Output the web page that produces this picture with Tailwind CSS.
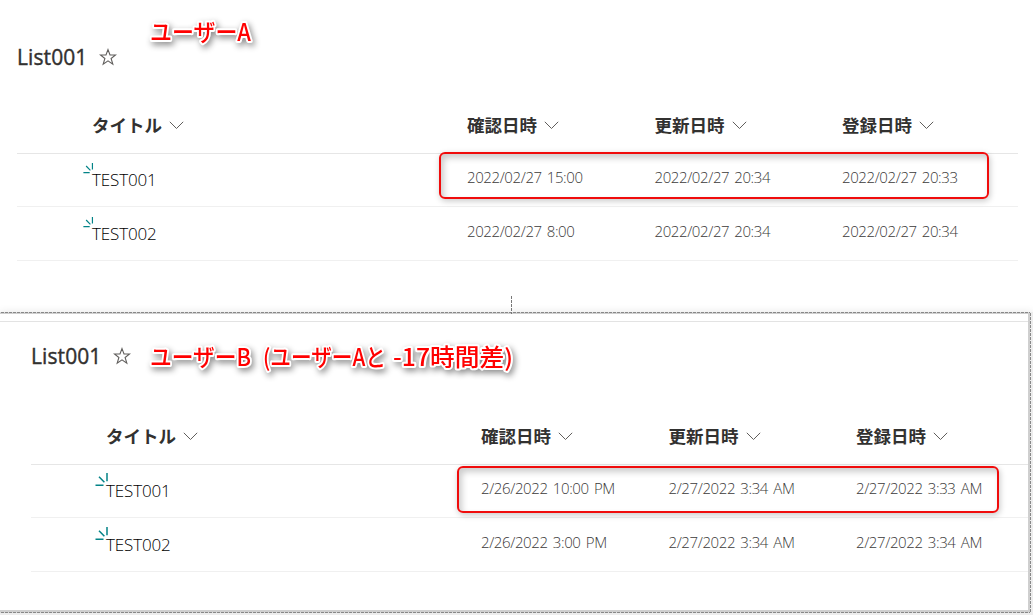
<!DOCTYPE html>
<html lang="ja">
<head>
    <meta charset="UTF-8">
    <meta name="viewport" content="width=device-width, initial-scale=1.0">
    <title>List001</title>
    <script src="https://cdn.jsdelivr.net/npm/@tailwindcss/browser@4"></script>
</head>
<body class="relative w-[1033px] h-[615px] overflow-hidden bg-white font-['Open_Sans','Noto_Sans_CJK_JP',sans-serif] text-[#323130] whitespace-nowrap">

    <!-- Shared icons -->
    <svg class="hidden">
        <symbol id="star" viewBox="0 0 18 18"><path d="M9 1.6 11 7h5.6l-4.5 3.5 1.7 5.6L9 12.8l-4.8 3.3 1.7-5.6L1.400 7H7z" fill="none" stroke="#605e5c" stroke-width="1.1"/></symbol>
        <symbol id="chevron" viewBox="0 0 15 9"><path d="M.8.8 7.500 7.500 14.200.8" fill="none" stroke="#605e5c" stroke-width="1"/></symbol>
        <symbol id="spark" viewBox="0 0 14 14"><path d="M.5 12.300H8.500M4 3.800 9.400 9.300M12 0V8.300" fill="none" stroke="#038387" stroke-width="1.500"/></symbol>
    </svg>

    <!-- User A -->
    <section class="h-[312px] pl-[17px] pr-[15px] pt-10 flex flex-col">
        <div class="h-[34px] flex items-center">
            <h1 class="w-[82px] pt-[2px] text-[21px] font-medium tracking-[0.1px] [-webkit-text-stroke:0.4px_#323130]">List001</h1>
            <svg class="size-[18px]"><use href="#star"/></svg>
        </div>
        <div class="mt-[25px] h-[55px] pb-[1px] pl-[75px] border-b border-[#e6e6e6] grid grid-cols-[375px_187.5px_187.5px_auto] items-center text-[17.5px] font-bold">
            <div class="flex items-center gap-[7px]"><span>タイトル</span><svg class="w-[15px] h-[9px]"><use href="#chevron"/></svg></div>
            <div class="flex items-center gap-[7px]"><span>確認日時</span><svg class="w-[15px] h-[9px]"><use href="#chevron"/></svg></div>
            <div class="flex items-center gap-[7px]"><span>更新日時</span><svg class="w-[15px] h-[9px]"><use href="#chevron"/></svg></div>
            <div class="flex items-center gap-[7px]"><span>登録日時</span><svg class="w-[15px] h-[9px]"><use href="#chevron"/></svg></div>
        </div>
        <div class="h-[53px] pl-[75px] border-b border-[#f0f0f0] grid grid-cols-[375px_187.5px_187.5px_auto] items-center text-[15px] font-light tracking-[-0.4px] [word-spacing:1.5px] text-[#3b3a39]">
            <div class="relative text-[17px] tracking-[-0.15px] text-black">TEST001<svg class="absolute -left-[9px] -top-[4px] size-[11px]"><use href="#spark"/></svg></div>
            <div class="pb-[5px]">2022/02/27 15:00</div>
            <div class="pb-[5px]">2022/02/27 20:34</div>
            <div class="pb-[5px]">2022/02/27 20:33</div>
        </div>
        <div class="h-[54px] pl-[75px] border-b border-[#f0f0f0] grid grid-cols-[375px_187.5px_187.5px_auto] items-center text-[15px] font-light tracking-[-0.4px] [word-spacing:1.5px] text-[#3b3a39]">
            <div class="relative text-[17px] tracking-[-0.15px] text-black">TEST002<svg class="absolute -left-[9px] -top-[4px] size-[11px]"><use href="#spark"/></svg></div>
            <div class="pb-[4px]">2022/02/27 8:00</div>
            <div class="pb-[4px]">2022/02/27 20:34</div>
            <div class="pb-[4px]">2022/02/27 20:34</div>
        </div>
    </section>

    <!-- User B -->
    <section class="h-[303px] bg-[#ededed] shadow-[0_0_8px_rgba(0,0,0,0.1)]">
        <div class="relative w-[1031px] h-[301px] pr-[3px] pb-[3px] pt-[2px] bg-[#cfcfcf]">
            <div class="h-[296px] bg-white">
                <div class="h-[8px] border-b border-[#e3e3e3]"></div>
                <div class="pl-[31px] pt-[17px]">
                    <div class="h-[34px] flex items-center">
                        <h1 class="w-[82px] pt-[2px] text-[21px] font-medium tracking-[0.1px] [-webkit-text-stroke:0.4px_#323130]">List001</h1>
                        <svg class="size-[18px]"><use href="#star"/></svg>
                    </div>
                    <div class="mt-[37px] h-[55px] pb-[1px] pl-[75px] border-b border-[#e6e6e6] grid grid-cols-[375px_187.5px_187.5px_auto] items-center text-[17.5px] font-bold">
                        <div class="flex items-center gap-[7px]"><span>タイトル</span><svg class="w-[15px] h-[9px]"><use href="#chevron"/></svg></div>
                        <div class="flex items-center gap-[7px]"><span>確認日時</span><svg class="w-[15px] h-[9px]"><use href="#chevron"/></svg></div>
                        <div class="flex items-center gap-[7px]"><span>更新日時</span><svg class="w-[15px] h-[9px]"><use href="#chevron"/></svg></div>
                        <div class="flex items-center gap-[7px]"><span>登録日時</span><svg class="w-[15px] h-[9px]"><use href="#chevron"/></svg></div>
                    </div>
                    <div class="h-[53px] pl-[75px] border-b border-[#f0f0f0] grid grid-cols-[375px_187.5px_187.5px_auto] items-center text-[15px] font-light tracking-[-0.4px] [word-spacing:1.8px] text-[#3b3a39]">
                        <div class="relative text-[17px] tracking-[-0.15px] text-black">TEST001<svg class="absolute -left-[11px] -top-[5px] size-[14px]"><use href="#spark"/></svg></div>
                        <div class="pb-[5px]">2/26/2022 10:00 PM</div>
                        <div class="pb-[5px]">2/27/2022 3:34 AM</div>
                        <div class="pb-[5px]">2/27/2022 3:33 AM</div>
                    </div>
                    <div class="h-[54px] pl-[75px] border-b border-[#f0f0f0] grid grid-cols-[375px_187.5px_187.5px_auto] items-center text-[15px] font-light tracking-[-0.4px] [word-spacing:1.8px] text-[#3b3a39]">
                        <div class="relative text-[17px] tracking-[-0.15px] text-black">TEST002<svg class="absolute -left-[11px] -top-[5px] size-[14px]"><use href="#spark"/></svg></div>
                        <div class="pb-[4px]">2/26/2022 3:00 PM</div>
                        <div class="pb-[4px]">2/27/2022 3:34 AM</div>
                        <div class="pb-[4px]">2/27/2022 3:34 AM</div>
                    </div>
                </div>
            </div>
            <!-- Dashed selection frame -->
            <div class="absolute left-0 top-0 w-full h-px bg-[repeating-linear-gradient(90deg,#ddd_0_1px,#888_1px_4px)]"></div>
            <div class="absolute left-0 bottom-0 w-full h-px bg-[repeating-linear-gradient(90deg,#ddd_0_1px,#888_1px_4px)]"></div>
            <div class="absolute right-0 top-0 w-px h-full bg-[repeating-linear-gradient(#eee_0_1px,#888_1px_4px)]"></div>
            <div class="absolute left-[511px] -top-[16px] w-px h-[18px] bg-[repeating-linear-gradient(#777_0_3px,#fff_3px_4px)]"></div>
        </div>
    </section>

    <!-- Annotations -->
    <div class="absolute left-[439px] top-[152px] w-[550px] h-[47px] rounded-[6px] border-2 border-[#f00c0c] shadow-[1px_2px_6px_rgba(0,0,0,0.22),inset_3px_4px_6px_rgba(0,0,0,0.2)]"></div>
    <div class="absolute left-[457px] top-[466px] w-[542px] h-[47px] rounded-[6px] border-2 border-[#f00c0c] shadow-[1px_2px_6px_rgba(0,0,0,0.22),inset_3px_4px_6px_rgba(0,0,0,0.2)]"></div>
    <svg class="absolute inset-0 w-full h-full pointer-events-none font-['Noto_Sans_CJK_JP',sans-serif] text-[23.5px] font-medium [filter:drop-shadow(2px_3px_3px_rgba(0,0,0,0.45))]" fill="#ff0000" stroke="#ffffff" stroke-width="4" stroke-linejoin="round" paint-order="stroke">
        <text x="150" y="41" textLength="101" lengthAdjust="spacingAndGlyphs">ユーザーA</text>
        <text x="150" y="366" textLength="101" lengthAdjust="spacingAndGlyphs">ユーザーB</text>
        <text x="263" y="366" textLength="123" lengthAdjust="spacingAndGlyphs">(ユーザーAと</text>
        <text x="393" y="366" textLength="120" lengthAdjust="spacingAndGlyphs">-17時間差)</text>
    </svg>
</body>
</html>
